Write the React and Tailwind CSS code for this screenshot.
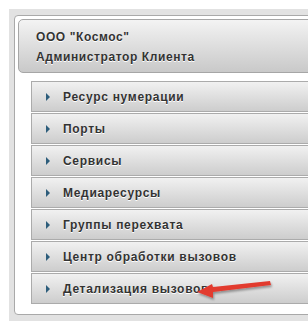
import React from "react";

const items = [
  "Ресурс нумерации",
  "Порты",
  "Сервисы",
  "Медиаресурсы",
  "Группы перехвата",
  "Центр обработки вызовов",
  "Детализация вызовов",
];

export default function App() {
  return (
    <div
      className="relative w-[308px] h-[330px] bg-white overflow-hidden"
      style={{ fontFamily: '"Liberation Sans", Arial, sans-serif' }}
    >
      <div className="absolute left-[9px] top-[9px] w-[320px] h-[312px] bg-[#e2e2e2]" />
      <div className="relative ml-[14px] mt-[15px] w-[320px] h-[300px] bg-white border border-[#a9a9a9] rounded-[4px] pt-[3px] pl-[3px] flex flex-col">
        <div className="h-[54px] rounded-[5px] border border-[#a6a6a6] bg-gradient-to-b from-[#f3f3f3] to-[#c9c9c9] pl-[17px] pt-[9px] flex flex-col gap-[3px] text-[12px] font-bold text-[#333] tracking-[0.6px] leading-[17px] [text-shadow:0_1px_0_#fff]">
          <div>ООО "Космос"</div>
          <div>Администратор Клиента</div>
        </div>
        <div className="ml-[13px] mt-[8px] flex flex-col gap-[1px]">
          {items.map((t) => (
            <div
              key={t}
              className="h-[31px] border border-[#ababab] bg-gradient-to-b from-[#f1f1f1] to-[#cdcdcd] flex items-center pl-[14px] text-[12px] font-bold text-[#333] tracking-[0.7px] [text-shadow:0_1px_0_#fff]"
            >
              <span className="w-0 h-0 border-y-[4px] border-y-transparent border-l-[4px] border-l-[#2d5d7b] mr-[13px]" />
              <span>{t}</span>
            </div>
          ))}
        </div>
      </div>
      <svg
        className="absolute left-0 top-0"
        width="308"
        height="330"
        viewBox="0 0 308 330"
      >
        <defs>
          <filter id="sh" x="-20%" y="-50%" width="140%" height="200%">
            <feDropShadow dx="1" dy="2" stdDeviation="1" floodColor="#000" floodOpacity="0.35" />
          </filter>
        </defs>
        <g filter="url(#sh)">
          <path d="M270 281 L213 287 L212 284 L197 292 L213 298 L213 292 L271 285 Z" fill="#e23a2f" />
        </g>
      </svg>
    </div>
  );
}
